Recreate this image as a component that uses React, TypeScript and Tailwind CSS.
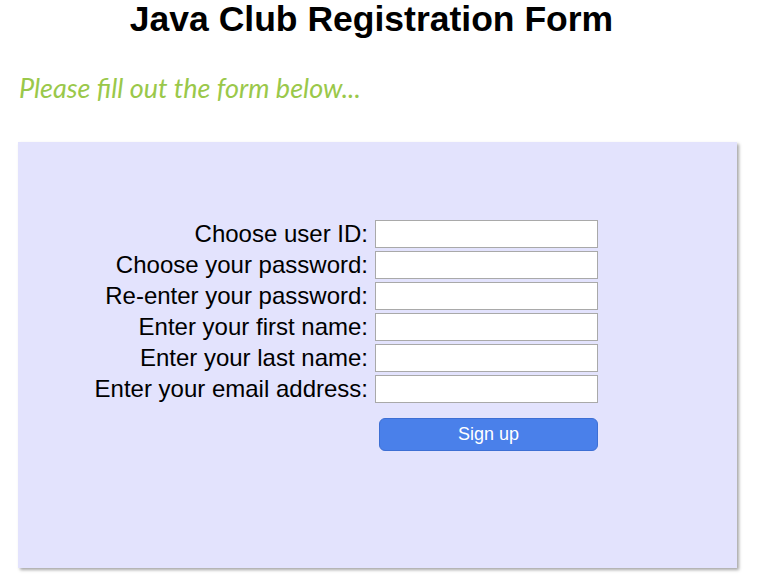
import React from 'react'

const fields = [
  'Choose user ID:',
  'Choose your password:',
  'Re-enter your password:',
  'Enter your first name:',
  'Enter your last name:',
  'Enter your email address:',
]

const App: React.FC = () => {
  return (
    <div className="min-h-[586px] bg-white font-['Liberation_Sans',Arial,sans-serif] text-black">
      {/* Header */}
      <h1 className="pr-[24px] text-center text-[35.5px] leading-[38px] font-bold">
        Java Club Registration Form
      </h1>
      <p className="mt-[35px] ml-[19px] font-['Lato','Open_Sans',sans-serif] text-[27px] leading-[30px] italic text-[#9ac84a]">
        Please fill out the form below...
      </p>

      {/* Form panel */}
      <div className="mt-[39px] ml-[18px] h-[426px] w-[719px] bg-[#e3e3fd] pt-[78px] shadow-[2px_2px_3px_rgba(0,0,0,0.35)]">
        <div className="ml-[50px] grid grid-cols-[300px_223px] gap-x-[7px] gap-y-[3px]">
          {fields.map((label) => (
            <React.Fragment key={label}>
              <label className="text-right text-[24px] leading-[28px] whitespace-nowrap">{label}</label>
              <input
                type="text"
                className="h-[28px] w-[223px] border border-[#a9a9a9] bg-white"
              />
            </React.Fragment>
          ))}
          <div />
          <button className="mt-[12px] ml-[4px] h-[33px] w-[219px] rounded-[6px] border border-[#3d6fd4] bg-[#4a80ea] text-[18px] text-white">
            Sign up
          </button>
        </div>
      </div>
    </div>
  )
}

export default App
